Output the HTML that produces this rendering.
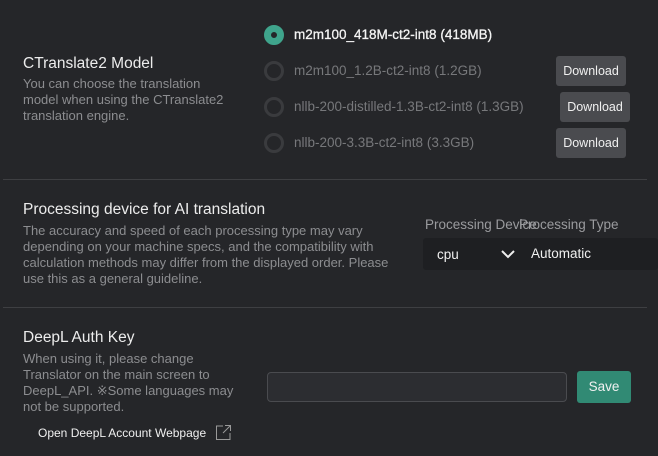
<!DOCTYPE html>
<html><head><style>
body{margin:0;width:658px;height:456px;background:#252629;font-family:"Liberation Sans",sans-serif;position:relative;overflow:hidden;color:#e6e6e6}
.a{position:absolute;white-space:nowrap}
.h{font-size:15.5px;color:#ececec}
.d{font-size:13px;color:#8c8d90;line-height:16px;white-space:normal}
.r{position:absolute;width:14px;height:14px;border-radius:50%;border:3px solid #3a3b3e}
.rt{font-size:13.5px;color:#77787b}
.btn{position:absolute;background:#4a4b4f;border-radius:3px;color:#f0f0f0;font-size:12.5px;text-align:center;line-height:30px}
.hr{position:absolute;left:3px;width:644px;height:1px;background:#3e3f42}
</style></head><body>
<div class="r" style="left:264px;top:25px;border:7px solid #3fa48c;width:6px;height:6px"></div>
<div class="a" style="left:294px;top:27px;font-size:13.5px;color:#f4f4f4;-webkit-text-stroke:0.3px #f4f4f4">m2m100_418M-ct2-int8 (418MB)</div>
<div class="r" style="left:264px;top:61px"></div>
<div class="a rt" style="left:294px;top:63px">m2m100_1.2B-ct2-int8 (1.2GB)</div>
<div class="r" style="left:264px;top:97px"></div>
<div class="a rt" style="left:294px;top:99px">nllb-200-distilled-1.3B-ct2-int8 (1.3GB)</div>
<div class="r" style="left:264px;top:133px"></div>
<div class="a rt" style="left:294px;top:135px">nllb-200-3.3B-ct2-int8 (3.3GB)</div>
<div class="btn" style="left:556px;top:56px;width:70px">Download</div>
<div class="btn" style="left:560px;top:92px;width:70px">Download</div>
<div class="btn" style="left:556px;top:128px;width:70px">Download</div>
<div class="a h" style="left:23px;top:55px">CTranslate2 Model</div>
<div class="a d" style="left:23px;top:76px;width:215px">You can choose the translation model when using the CTranslate2 translation engine.</div>
<div class="hr" style="top:179px"></div>
<div class="a h" style="left:23px;top:201px">Processing device for AI translation</div>
<div class="a d" style="left:23px;top:223px;width:385px">The accuracy and speed of each processing type may vary depending on your machine specs, and the compatibility with calculation methods may differ from the displayed order. Please use this as a general guideline.</div>
<div class="a" style="left:425px;top:217px;font-size:13.5px;color:#9a9b9e">Processing Device</div>
<div class="a" style="left:519px;top:217px;font-size:13.5px;color:#9a9b9e">Processing Type</div>
<div class="a" style="left:423px;top:238px;width:235px;height:32px;background:#1e1f22;border-radius:3px"></div>
<div class="a" style="left:437px;top:247px;font-size:13.5px;color:#f0f0f0">cpu</div>
<svg class="a" style="left:500px;top:248px" width="16" height="12"><path d="M2 3l6 6 6-6" stroke="#eee" stroke-width="2" fill="none"/></svg>
<div class="a" style="left:531px;top:246px;font-size:13.5px;color:#f0f0f0">Automatic</div>
<div class="hr" style="top:307px"></div>
<div class="a h" style="left:23px;top:329px">DeepL Auth Key</div>
<div class="a d" style="left:23px;top:351px;width:220px">When using it, please change Translator on the main screen to DeepL_API. ※Some languages may not be supported.</div>
<div class="a" style="left:267px;top:372px;width:298px;height:28px;border:1px solid #4a4b4f;border-radius:4px;background:#2c2d31"></div>
<div class="a" style="left:577px;top:371px;width:54px;height:32px;background:#318a74;border-radius:3px;color:#f0f0f0;font-size:13.5px;text-align:center;line-height:32px">Save</div>
<div class="a" style="left:38px;top:426px;font-size:12px;color:#f0f0f0">Open DeepL Account Webpage</div>
<svg class="a" style="left:215px;top:424px" width="17" height="17"><path d="M8 2H1.5v13.5H15V9M10 1.5h5.5V7M15.5 1.5L8 9" stroke="#999" stroke-width="1" fill="none"/></svg>
</body></html>
